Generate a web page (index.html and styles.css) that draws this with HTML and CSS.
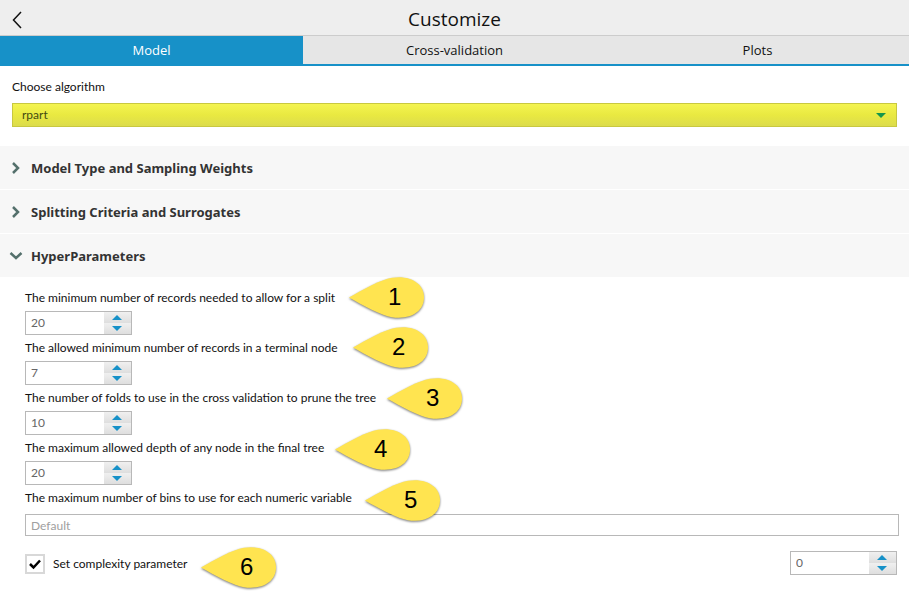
FILE: index.html
```
<!DOCTYPE html>
<html lang="en">
<head>
<meta charset="utf-8">
<title>Customize</title>
<link rel="stylesheet" href="styles.css">
</head>
<body>
<svg class="defs" aria-hidden="true">
  <symbol id="up" viewBox="0 0 10 5"><path d="M0 5 5 0l5 5z"/></symbol>
  <symbol id="down" viewBox="0 0 10 5"><path d="M0 0h10L5 5z"/></symbol>
  <symbol id="drop" viewBox="0 0 75 41"><path d="M0 20.500C14 12.500 32 2.500 43 .8C62-2 75 7 75 20.500S62 43 43 40.200C32 38.500 14 28.500 0 20.500z"/></symbol>
</svg>
<header class="header">
  <button class="back" type="button" aria-label="Back"><svg width="10" height="18" viewBox="0 0 10 18"><path d="M9 1 1.500 9 9 17"/></svg></button>
  <h1>Customize</h1>
</header>
<nav class="tabs">
  <button class="tab active" type="button">Model</button>
  <button class="tab" type="button">Cross-validation</button>
  <button class="tab" type="button">Plots</button>
</nav>
<main>
  <div class="algorithm">
    <label for="algorithm">Choose algorithm</label>
    <div class="select">
      <select id="algorithm"><option>rpart</option></select>
      <svg width="10" height="5"><use href="#down"/></svg>
    </div>
  </div>
  <div class="sections">
    <button class="section" type="button"><svg width="20" height="12" viewBox="0 0 20 12"><path d="M7 1l5 5-5 5"/></svg>Model Type and Sampling Weights</button>
    <button class="section" type="button"><svg width="20" height="12" viewBox="0 0 20 12"><path d="M7 1l5 5-5 5"/></svg>Splitting Criteria and Surrogates</button>
    <button class="section" type="button" aria-expanded="true"><svg width="20" height="12" viewBox="0 0 20 12"><path d="M4.500 3l5.500 5 5.500-5"/></svg>HyperParameters</button>
  </div>
  <div class="params">
    <label for="split">The minimum number of records needed to allow for a split</label>
    <div class="spinner"><input id="split" type="number" value="20"><div class="steps"><button type="button" aria-label="Increase"><svg><use href="#up"/></svg></button><button type="button" aria-label="Decrease"><svg><use href="#down"/></svg></button></div></div>
    <label for="node">The allowed minimum number of records in a terminal node</label>
    <div class="spinner"><input id="node" type="number" value="7"><div class="steps"><button type="button" aria-label="Increase"><svg><use href="#up"/></svg></button><button type="button" aria-label="Decrease"><svg><use href="#down"/></svg></button></div></div>
    <label for="folds">The number of folds to use in the cross validation to prune the tree</label>
    <div class="spinner"><input id="folds" type="number" value="10"><div class="steps"><button type="button" aria-label="Increase"><svg><use href="#up"/></svg></button><button type="button" aria-label="Decrease"><svg><use href="#down"/></svg></button></div></div>
    <label for="depth">The maximum allowed depth of any node in the final tree</label>
    <div class="spinner"><input id="depth" type="number" value="20"><div class="steps"><button type="button" aria-label="Increase"><svg><use href="#up"/></svg></button><button type="button" aria-label="Decrease"><svg><use href="#down"/></svg></button></div></div>
    <label for="bins">The maximum number of bins to use for each numeric variable</label>
    <input class="text" id="bins" type="text" placeholder="Default">
    <div class="complexity">
      <input class="check" id="set-cp" type="checkbox" checked>
      <label for="set-cp">Set complexity parameter</label>
      <div class="spinner"><input type="number" value="0" aria-label="Complexity parameter"><div class="steps"><button type="button" aria-label="Increase"><svg><use href="#up"/></svg></button><button type="button" aria-label="Decrease"><svg><use href="#down"/></svg></button></div></div>
    </div>
  </div>
</main>
<div class="callout c1"><svg><use href="#drop"/></svg><span>1</span></div>
<div class="callout c2"><svg><use href="#drop"/></svg><span>2</span></div>
<div class="callout c3"><svg><use href="#drop"/></svg><span>3</span></div>
<div class="callout c4"><svg><use href="#drop"/></svg><span>4</span></div>
<div class="callout c5"><svg><use href="#drop"/></svg><span>5</span></div>
<div class="callout c6"><svg><use href="#drop"/></svg><span>6</span></div>
</body>
</html>
```
FILE: styles.css
```
* { box-sizing: border-box; }
body {
  margin: 0;
  position: relative;
  background: #fff;
  color: #111;
  font: 12px/16px Lato, "Open Sans", sans-serif;
}
button, input, select { font: inherit; color: inherit; border: 0; margin: 0; padding: 0; background: none; }
.defs { position: absolute; width: 0; height: 0; }

.header {
  display: grid;
  grid-template-columns: 40px 1fr 40px;
  align-items: center;
  height: 36px;
  background: #eee;
  border-bottom: 1px solid #ccc;
}
.header h1 { margin: 0; padding-top: 2px; text-align: center; font-family: "Open Sans", sans-serif; font-size: 19px; line-height: 24px; font-weight: 400; }
.back { display: flex; padding: 4px 12px 0; }
.back path { fill: none; stroke: #111; stroke-width: 1.500; }

.tabs { display: flex; height: 30px; background: #e6e6e6; border-bottom: 2px solid #1791c8; }
.tab { flex: 1; height: 28px; font-family: "Open Sans", sans-serif; font-size: 13px; line-height: 28px; }
.tab.active { height: 30px; padding-bottom: 2px; background: #1791c8; color: #fff; }

.algorithm { padding: 12px 12px 0; }
.algorithm label { display: block; height: 25px; line-height: 18px; }
.select {
  display: flex;
  align-items: center;
  height: 24px;
  background: linear-gradient(#f4f450, #e9e941 50%, #dcdc4c);
  border: 1px solid #c8c840;
}
.select select { flex: 1; height: 22px; padding-left: 9px; margin-right: -25px; padding-right: 25px; appearance: none; color: #444a10; outline: 0; }
.select svg { margin-right: 10px; margin-left: 5px; fill: #14964c; pointer-events: none; }

.sections { display: grid; gap: 1px; margin-top: 19px; }
.section {
  display: flex;
  align-items: center;
  gap: 5px;
  height: 43px;
  padding-left: 6px;
  background: #f7f7f7;
  color: #333;
  font-family: "Noto Sans", sans-serif;
  font-size: 13px;
  font-weight: 700;
  text-align: left;
}
.section svg path { fill: none; stroke: #54706c; stroke-width: 2.500; }

.params { padding: 8px 10px 29px 25px; }
.params > label { display: block; height: 26px; line-height: 26px; }
.spinner { display: flex; width: 107px; height: 24px; border: 1px solid #b8b8b8; }
.spinner input { flex: 1; width: 0; padding-left: 5px; color: #666; appearance: textfield; }
.spinner input::-webkit-inner-spin-button { appearance: none; margin: 0; }
.steps { display: grid; grid-template-rows: 1fr 1fr; width: 27px; }
.steps button { display: flex; align-items: center; justify-content: center; padding-right: 1px; background: linear-gradient(#f0f0f0, #dedede); }
.steps svg { width: 10px; height: 5px; fill: #1791c8; }
.text { display: block; width: 100%; height: 22px; margin-top: 3px; padding: 0 5px; border: 1px solid #b8b8b8; }
.text::placeholder { color: #a0a0a0; opacity: 1; }
.complexity { display: flex; align-items: center; margin-top: 15px; padding-right: 2px; }
.complexity label { flex: 1; margin-left: 8px; padding-top: 2px; }
.check {
  appearance: none;
  width: 20px;
  height: 20px;
  margin-top: 2px;
  border: 2px solid #d8d8d8;
  background: #fff url("data:image/svg+xml,%3Csvg xmlns='http://www.w3.org/2000/svg' viewBox='0 0 16 16'%3E%3Cpath d='M3 8l3.500 3.500L13 4.500' fill='none' stroke='%23000' stroke-width='2.500'/%3E%3C/svg%3E");
}

.callout { position: absolute; width: 75px; height: 41px; font: 24px/39px "Liberation Sans", Arial, sans-serif; color: #000; }
.callout svg { position: absolute; inset: 0; width: 75px; height: 41px; overflow: visible; fill: #ffe450; filter: drop-shadow(0 1px 1px #0008); }
.callout span { position: absolute; left: 39px; top: 0; }
.c1 { left: 349px; top: 277px; }
.c2 { left: 353px; top: 327px; }
.c3 { left: 387px; top: 378px; }
.c4 { left: 335px; top: 429px; }
.c5 { left: 365px; top: 480px; }
.c6 { left: 201px; top: 547px; }
```
